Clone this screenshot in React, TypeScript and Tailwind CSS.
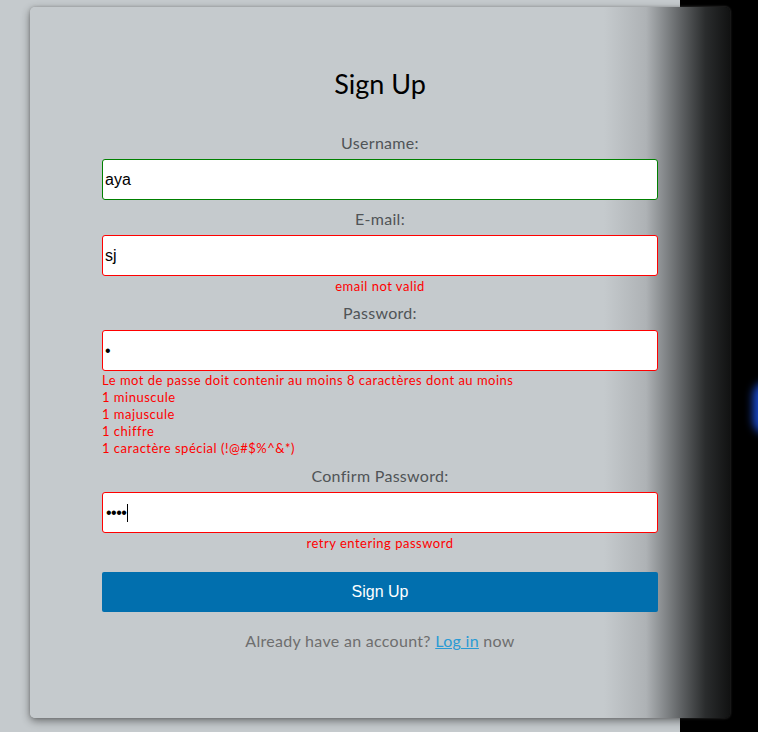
import { useState } from "react";

const gill = "font-['Lato','Open_Sans',sans-serif]";
const arial = "font-['Liberation_Sans',Arial,sans-serif]";

function Label({ text, className = "" }: { text: string; className?: string }) {
  return (
    <label
      className={`block text-center text-[16px] leading-[20px] tracking-[0.3px] text-[#505457] ${gill} ${className}`}
    >
      {text}
    </label>
  );
}

function ErrorText({ children, className = "" }: { children: React.ReactNode; className?: string }) {
  return (
    <p className={`text-[13px] leading-[17px] tracking-[0.5px] text-[#ff0000] ${gill} ${className}`}>
      {children}
    </p>
  );
}

export default function App() {
  const [username, setUsername] = useState("aya");
  const [email, setEmail] = useState("sj");
  const [password, setPassword] = useState("a");

  return (
    <div className="relative min-h-[732px] overflow-hidden bg-[linear-gradient(to_right,#c5cacd_680px,#000_680px)] pt-[7px]">
      {/* blue glow peeking on the right */}
      <div className="absolute left-[753px] top-[382px] h-[52px] w-[28px] rounded-full bg-[#1848c8] blur-[4px]" />

      <div className="relative ml-[30px] flex h-[711px] w-[700px] flex-col rounded-[5px] bg-[linear-gradient(to_right,#c5cacd_82%,#aeb2b5_88%,#5f6264_93%,#2a2c2d_96.5%,#111212_100%)] px-[72px] pt-[60px] shadow-[0_3px_8px_rgba(0,0,0,0.45),0_0_3px_rgba(140,140,140,0.6)]">
        <h1 className={`text-center text-[27px] leading-[34px] text-black ${gill}`}>Sign Up</h1>

        <Label text="Username:" className="mt-[32px]" />
        <input
          value={username}
          onChange={(e) => setUsername(e.target.value)}
          className={`mt-[6px] h-[41px] w-full rounded-[3px] border border-[#008000] bg-white px-[2px] text-[16px] text-black outline-none ${arial}`}
        />

        <Label text="E-mail:" className="mt-[9px]" />
        <input
          value={email}
          onChange={(e) => setEmail(e.target.value)}
          className={`mt-[6px] h-[41px] w-full rounded-[3px] border border-[#ff0000] bg-white px-[2px] text-[16px] text-black outline-none ${arial}`}
        />
        <ErrorText className="mt-[2px] text-center">email not valid</ErrorText>

        <Label text="Password:" className="mt-[8px]" />
        <input
          type="password"
          value={password}
          onChange={(e) => setPassword(e.target.value)}
          className={`mt-[7px] h-[41px] w-full rounded-[3px] border border-[#ff0000] bg-white px-[2px] text-[16px] text-black outline-none ${arial}`}
        />
        <ErrorText className="mt-[1px]">
          Le mot de passe doit contenir au moins 8 caractères dont au moins
          <br />1 minuscule
          <br />1 majuscule
          <br />1 chiffre
          <br />1 caractère spécial (!@#$%^&amp;*)
        </ErrorText>

        <Label text="Confirm Password:" className="mt-[9px]" />
        <div
          className={`mt-[6px] flex h-[41px] w-full items-center rounded-[3px] border border-[#ff0000] bg-white px-[3px] text-[16px] text-black ${arial}`}
        >
          <span className="tracking-[-0.5px]">••••</span>
          <span className="ml-[1px] h-[18px] w-[1px] bg-black" />
        </div>
        <ErrorText className="mt-[2px] text-center">retry entering password</ErrorText>

        <button
          className={`mt-[20px] h-[40px] w-full rounded-[2px] bg-[#016fae] text-[16px] text-white ${arial}`}
        >
          Sign Up
        </button>

        <p className={`mt-[19px] text-center text-[16px] leading-[20px] tracking-[0.3px] text-[#6e6e6e] ${gill}`}>
          Already have an account?{" "}
          <a href="#" className="text-[#2a9ad4] underline">
            Log in
          </a>{" "}
          now
        </p>
      </div>
    </div>
  );
}
